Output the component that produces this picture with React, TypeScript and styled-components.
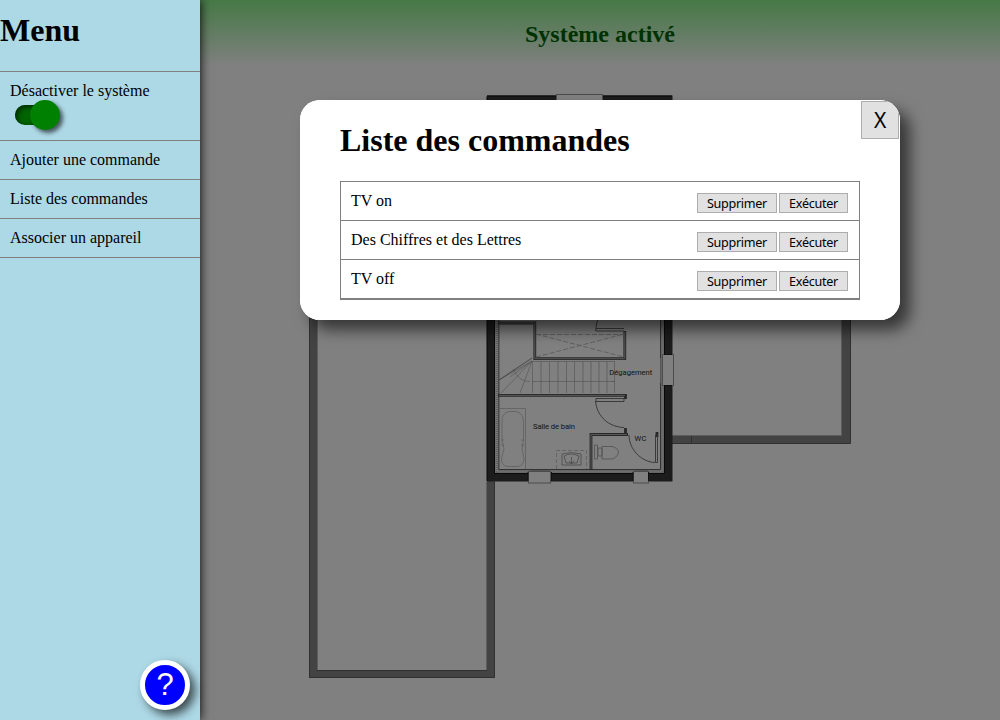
import React from "react";
import styled, { createGlobalStyle } from "styled-components";

const GlobalStyle = createGlobalStyle`
  * { box-sizing: border-box; }
  html, body { margin: 0; height: 100%; overflow: hidden; }
  body {
    font-family: "Liberation Serif", "Times New Roman", serif;
    font-size: 16px;
    color: #000;
    background: #808080;
  }
`;

const Page = styled.div`
  display: flex;
  width: 1000px;
  height: 720px;
`;

const Sidebar = styled.nav`
  position: relative;
  z-index: 1;
  width: 200px;
  display: flex;
  flex-direction: column;
  background: lightblue;
  box-shadow: 0 0 10px #000;
`;

const MenuTitle = styled.h1`
  margin: 0;
  height: 71px;
  padding-top: 12px;
  font-size: 32px;
  line-height: 37px;
`;

const MenuList = styled.ul`
  margin: 0;
  padding: 0;
  list-style: none;
  border-top: 1px solid gray;
`;

const MenuItem = styled.li`
  padding: 10px;
  line-height: 18px;
  border-bottom: 1px solid gray;
`;

const Switch = styled.div`
  width: 45px;
  height: 30px;
  margin-left: 5px;
  display: flex;
  align-items: center;
`;

const Track = styled.div`
  width: 40px;
  height: 20px;
  border-radius: 10px;
  background: #006400;
  box-shadow: inset 2px 2px 5px #002800;
`;

const Knob = styled.div`
  flex: none;
  width: 30px;
  height: 30px;
  margin-left: -25px;
  border-radius: 50%;
  background: green;
  box-shadow: 3px 3px 4px rgba(0, 0, 0, 0.6);
`;

const HelpButton = styled.button`
  width: 50px;
  height: 50px;
  margin: auto 10px 10px auto;
  padding: 0;
  border: 5px solid #fff;
  border-radius: 50%;
  background: blue;
  color: #fff;
  font: 31px/40px "Liberation Sans", Arial, sans-serif;
  box-shadow: 5px 5px 10px rgba(0, 0, 0, 0.65);
`;

const Main = styled.main`
  flex: 1;
  display: flex;
  flex-direction: column;
`;

const Status = styled.header`
  height: 70px;
  padding-top: 20px;
  text-align: center;
  background: linear-gradient(#467946, #808080 66px);
`;

const StatusText = styled.h2`
  margin: 0;
  font-size: 24px;
  line-height: 28px;
  color: #003200;
`;

const Plan = styled.svg`
  display: block;
  width: 800px;
  height: 650px;
  font-family: Roboto, sans-serif;
  font-size: 7.6px;
`;

const Dialog = styled.section`
  position: absolute;
  z-index: 2;
  left: 300px;
  top: 100px;
  width: 600px;
  height: 220px;
  padding: 22px 40px 0;
  overflow: hidden;
  border-radius: 20px;
  background: #fff;
`;

const DialogShadow = styled(Dialog)`
  z-index: 1;
  box-shadow: 10px 10px 15px rgba(0, 0, 0, 0.58);
`;

const DialogTitle = styled.h1`
  margin: 0 0 22px;
  font-size: 32px;
  line-height: 37px;
`;

const Button = styled.button`
  height: 20px;
  padding: 0;
  border: 1px solid #adadad;
  background: #e1e1e1;
  color: #000;
  font: 12.6px/20px "Noto Sans", sans-serif;
  letter-spacing: -0.3px;
`;

const DeleteButton = styled(Button)`
  width: 80px;
`;

const RunButton = styled(Button)`
  width: 69px;
`;

const CloseButton = styled(Button)`
  position: absolute;
  top: 1px;
  right: 1px;
  width: 38px;
  height: 38px;
  font-size: 21px;
  line-height: 37px;
`;

const Commands = styled.ul`
  margin: 0;
  padding: 0;
  list-style: none;
  border: 1px solid gray;
`;

const Command = styled.li`
  display: flex;
  height: 39px;
  padding: 10px 11px 0 10px;
  line-height: 18px;
  border-bottom: 1px solid gray;
`;

const Actions = styled.div`
  display: flex;
  gap: 2px;
  margin: 1px 0 0 auto;
`;

const commands = ["TV on", "Des Chiffres et des Lettres", "TV off"];
const entries = ["Ajouter une commande", "Liste des commandes", "Associer un appareil"];
const steps = [532.5, 541, 549.5, 558, 566.5, 574.5, 583, 591, 599, 607];

function FloorPlan() {
  return (
    <Plan viewBox="200 70 800 650" fill="none" stroke="#333">
      {/* outdoor walls */}
      <g stroke="#434343" strokeWidth="8">
        <path d="M313 200V674H491V480" />
        <path d="M846 200V439.5H672" />
      </g>
      <g stroke="#303030">
        <path d="M309.5 200V677.5H494.5V482M317 670.5H487" />
        <path d="M850.5 200V443.5H672M691.5 435V443" />
      </g>
      <path d="M317.5 200V670M486.5 482V670M841.5 200V435.5H673" stroke="#5d5d5d" />

      {/* insulated outer shell */}
      <path d="M491 99.5V477.5H668.5V99.5Z" stroke="#1c1c1c" strokeWidth="8" />
      <path d="M487 96H672M487 96.5V481M494.5 100V473.5H664.5V100" stroke="#090909" />
      <path d="M497 104V471.5H662.5V104" stroke="#5c5c5c" strokeWidth="3" />
      <path d="M497 104V471.5H662.5V104" stroke="#7c7c7c" strokeWidth="2.4" strokeDasharray="1 1" />
      <path d="M498.9 104V469.5H660.5V104" stroke="#333" />

      {/* windows */}
      <g fill="#808080" stroke="#4c4c4c">
        <rect x="556.5" y="94.5" width="46" height="10" />
        <rect x="662.5" y="354.5" width="11" height="31" />
        <rect x="528.5" y="471.5" width="22" height="11.5" />
        <rect x="633.5" y="471.5" width="15" height="11.5" />
      </g>
      <path d="M660.5 358V383M530 470.5H550M635 470.5H648" stroke="#555" />
      <path d="M528 472V481M551.5 472V481M633 472V481M648.5 472V481M664 354.5H672M664 385.5H672" stroke="#111" />

      {/* partition walls */}
      <g stroke="#282828" strokeWidth="2.8">
        <path d="M498 323H534.8V358.7H626M624.8 331V359.5" />
        <path d="M498 395.4H626M625.5 394V399M591 470V434.5H628M625.5 428V435M657 432V437" />
      </g>
      <g stroke="#666" strokeWidth="0.8">
        <path d="M499 323H534.8V358.7H625M624.8 332V358M499 395.4H625M591 469V434.5H627" />
      </g>

      {/* doors */}
      <g stroke="#333" strokeWidth="0.9">
        <path d="M596 331H624M596 328.5H624M595.5 331Q596 322 600 314" />
        <path d="M596 398.5H624V401.5H596ZM595.5 401C597 417 609 427 624 427.5" />
        <path d="M655.5 435H657.5V462.5H655.5ZM629 435C629 449 641 462 655 462.5" />
      </g>

      {/* closet */}
      <path d="M536 334.5H624M536 334L624 357M536 357L624 334" stroke="#585858" strokeWidth="0.8" strokeDasharray="5 2" />

      {/* staircase */}
      <g stroke="#585858" strokeWidth="0.7">
        <path d="M532 361.5H615M614.5 361V393M532 381.5H615M611 381.5H615M499 380L532 361L501 393M532 361L520 393M532 361L510 377M513 369Q519 382 530 381.5" />
        {steps.map((x) => (
          <path key={x} d={`M${x} 361V393`} />
        ))}
      </g>
      <path d="M499 380L532 358" stroke="#484848" />

      {/* bathroom fittings */}
      <g stroke="#606060" strokeWidth="0.8">
        <path d="M499 408.5H525.5V469" />
        <path d="M509 411.5H516Q523 413 523.5 421V440L522 449L524 458Q524 467 516 466.5H509Q501 467 501.5 458L504 449L502 440V421Q502 413 509 411.5Z" />
        <path d="M501 440H504M501 445H504M521 440H524M521 445H524" />
        <path d="M556.5 469V450.5H586.5V469" strokeDasharray="4 2" />
        <path d="M562 454Q571 451 581 454V465H562ZM564 456Q571 452 579 456L577 463H566ZM571.5 457V464M569 461L571.5 464L574 461" stroke="#4a4a4a" />
        <path d="M594.5 445H597.5V459H594.5ZM598 448H602V456H598ZM602 446.5H612Q618 448 618.5 452Q618 457 612 459H602Z" stroke="#505050" />
      </g>

      <g fill="#111" stroke="none">
        <text x="609.3" y="374.5" textLength="43">Dégagement</text>
        <text x="533" y="428.5" textLength="42">Salle de bain</text>
        <text x="634.5" y="440.5" textLength="12">WC</text>
      </g>
    </Plan>
  );
}

export default function App() {
  return (
    <Page>
      <GlobalStyle />
      <Sidebar>
        <MenuTitle>Menu</MenuTitle>
        <MenuList>
          <MenuItem>
            Désactiver le système
            <Switch>
              <Track />
              <Knob />
            </Switch>
          </MenuItem>
          {entries.map((label) => (
            <MenuItem key={label}>{label}</MenuItem>
          ))}
        </MenuList>
        <HelpButton>?</HelpButton>
      </Sidebar>
      <Main>
        <Status>
          <StatusText>Système activé</StatusText>
        </Status>
        <FloorPlan />
      </Main>
      <DialogShadow as="div" />
      <Dialog>
        <DialogTitle>Liste des commandes</DialogTitle>
        <Commands>
          {commands.map((name) => (
            <Command key={name}>
              {name}
              <Actions>
                <DeleteButton>Supprimer</DeleteButton>
                <RunButton>Exécuter</RunButton>
              </Actions>
            </Command>
          ))}
        </Commands>
        <CloseButton>X</CloseButton>
      </Dialog>
    </Page>
  );
}
